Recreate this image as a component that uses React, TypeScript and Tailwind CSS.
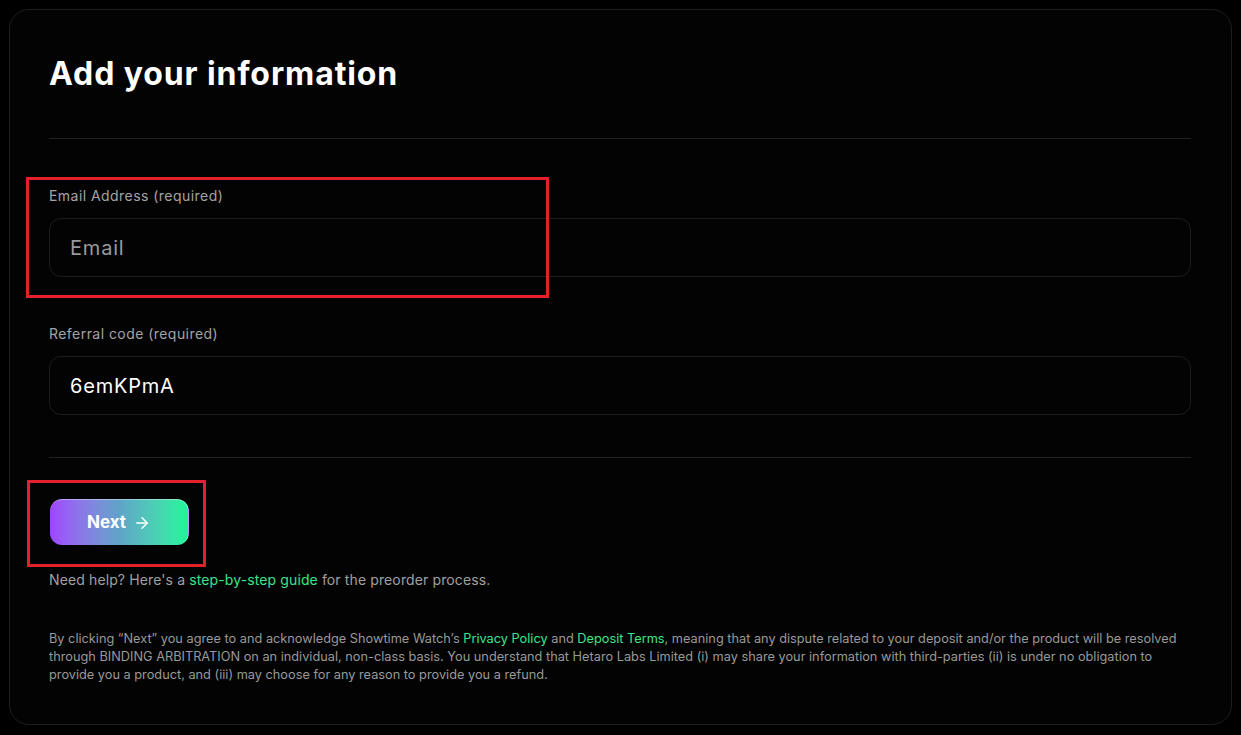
import { ArrowRight } from 'lucide-react';

function Field({ label, placeholder, value }: { label: string; placeholder?: string; value?: string }) {
  return (
    <div>
      <label className="block text-[14px] leading-[20px] tracking-[0.45px] text-[#a3a3a3]">{label}</label>
      <div className="mt-[12px] flex h-[59px] items-center rounded-[12px] border border-[#1c1c1c] px-[20px]">
        {value ? (
          <span className="text-[20px] tracking-[0.8px] text-white">{value}</span>
        ) : (
          <span className="text-[20px] tracking-[0.8px] text-[#9a9a9a]">{placeholder}</span>
        )}
      </div>
    </div>
  );
}

export default function App() {
  return (
    <div
      className="relative min-h-[735px] bg-black pt-[9px] pb-[10px]"
      style={{ fontFamily: 'Inter, "Noto Sans", sans-serif' }}
    >
      <div className="mx-[9px] h-[716px] rounded-[20px] border border-[#1e1e1e] bg-[#030303] pl-[39px] pr-[40px] pt-[44px]">
        <h1 className="text-[32px] font-bold leading-[40px] tracking-[0.9px] text-white">
          Add your information
        </h1>

        <div className="mt-[44px] h-px bg-[#222222]" />

        <div className="mt-[47px]">
          <Field label="Email Address (required)" placeholder="Email" />
        </div>
        <div className="mt-[47px]">
          <Field label="Referral code (required)" value="6emKPmA" />
        </div>

        <div className="mt-[42px] h-px bg-[#222222]" />

        <button className="ml-px mt-[41px] flex h-[46px] w-[139px] items-center justify-center gap-[7px] rounded-[12px] border-t border-r border-white/40 bg-gradient-to-r from-[#a042ff] via-[#5fa3c9] to-[#18f798] text-[17px] font-bold text-white">
          Next
          <ArrowRight className="h-[18px] w-[18px]" strokeWidth={2} />
        </button>

        <p className="mt-[25px] text-[14px] leading-[20px] tracking-[0.12px] text-[#a0a0a0]">
          Need help? Here's a <span className="text-[#3ee48a]">step-by-step guide</span> for the preorder process.
        </p>

        <p className="mt-[40px] text-[12.75px] leading-[18px] text-[#999999]">
          By clicking “Next” you agree to and acknowledge Showtime Watch’s{' '}
          <span className="text-[#3ee48a]">Privacy Policy</span> and{' '}
          <span className="text-[#3ee48a]">Deposit Terms</span>, meaning that any dispute related to your deposit and/or the
          product will be resolved through BINDING ARBITRATION on an individual, non-class basis. You understand that Hetaro
          Labs Limited (i) may share your information with third-parties (ii) is under no obligation to provide you a
          product, and (iii) may choose for any reason to provide you a refund.
        </p>
      </div>

      {/* annotation boxes */}
      <div className="pointer-events-none absolute left-[26px] top-[177px] h-[121px] w-[523px] border-[3px] border-[#e3202b]" />
      <div className="pointer-events-none absolute left-[27px] top-[480px] h-[87px] w-[179px] border-[3px] border-[#e3202b]" />
    </div>
  );
}
